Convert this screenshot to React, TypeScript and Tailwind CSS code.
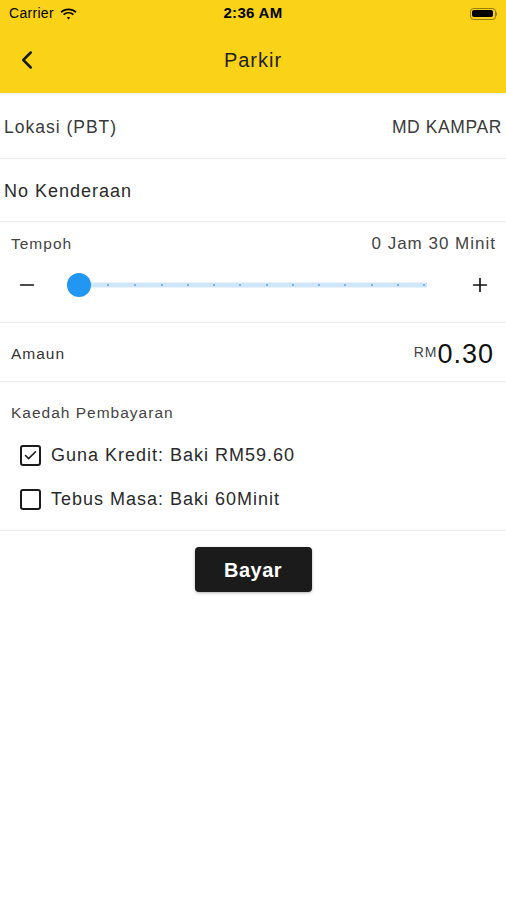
import { ChevronLeft, Minus, Plus, Check } from "lucide-react";

const ticks = [108, 135, 162, 188, 214, 240, 267, 293, 319, 345, 372, 398, 424];

function StatusBar() {
  return (
    <div className="h-[27px] px-[9px] flex items-center justify-between text-[14px] text-black">
      <div className="flex items-center gap-[6px] w-[120px]">
        <span className="tracking-[0.3px]">Carrier</span>
        <svg width="17" height="12" viewBox="0 0 17 12">
          <path d="M8.5 2.2c2.6 0 5 1 6.8 2.7l1.2-1.3C14.4 1.6 11.6.5 8.5.5S2.6 1.6.5 3.6l1.2 1.3C3.5 3.2 5.9 2.2 8.5 2.2z" fill="#000" />
          <path d="M8.5 5.6c1.6 0 3.1.6 4.3 1.7l1.2-1.3C12.5 4.6 10.6 3.9 8.5 3.9S4.5 4.6 3 6l1.2 1.3C5.4 6.2 6.9 5.6 8.5 5.6z" fill="#000" />
          <path d="M8.5 8.9c.7 0 1.3.3 1.8.7L8.5 11.5 6.7 9.6c.5-.4 1.1-.7 1.8-.7z" fill="#000" />
        </svg>
      </div>
      <span className="font-bold text-[15px] tracking-[0.3px]">2:36 AM</span>
      <div className="w-[120px] flex justify-end">
        <div className="flex items-center">
          <div className="w-[26px] h-[12px] rounded-[3.5px] border border-black/40 p-[1.5px]">
            <div className="w-full h-full rounded-[2px] bg-black" />
          </div>
          <div className="w-[1.5px] h-[4px] bg-black/40 rounded-r" />
        </div>
      </div>
    </div>
  );
}

export default function App() {
  return (
    <div
      className="w-[506px] h-[900px] bg-white overflow-hidden"
      style={{ fontFamily: "'Liberation Sans', Arial, sans-serif" }}
    >
      <div className="bg-[#fad318] shadow-[0_1px_2px_rgba(0,0,0,0.08)]">
        <StatusBar />
        <div className="h-[66px] flex items-center relative">
          <ChevronLeft className="w-[30px] h-[30px] ml-[12px] text-[#1a1a1a]" strokeWidth={2} />
          <span className="absolute left-1/2 -translate-x-1/2 text-[20px] tracking-[1px] text-[#1f1f1f]">
            Parkir
          </span>
        </div>
      </div>

      <div className="h-[66px] flex items-center justify-between px-[4px] pt-[3px] border-b border-[#ececec] text-[17.5px] tracking-[1px] text-[#3a3a3a]">
        <span>Lokasi (PBT)</span>
        <span className="tracking-[0.6px]">MD KAMPAR</span>
      </div>
      <div className="h-[63px] flex items-center px-[4px] pt-[3px] border-b border-[#ececec] text-[18px] tracking-[1px] text-[#2a2a2a]">
        <span>No Kenderaan</span>
      </div>

      <div className="h-[101px] border-b border-[#ececec] px-[11px] pt-[9px]">
        <div className="flex justify-between items-baseline text-[#444] tracking-[1px]">
          <span className="text-[15.5px]">Tempoh</span>
          <span className="text-[17px] mr-[-1px]">0 Jam 30 Minit</span>
        </div>
        <div className="flex items-center mt-[13px] h-[30px]">
          <Minus className="w-[22px] h-[22px] ml-[5px] text-[#111]" strokeWidth={1.8} />
          <div className="relative flex-1 h-full ml-[29px] mr-[44px]">
            <div className="absolute left-[12px] right-[-2px] top-1/2 -translate-y-1/2 h-[5px] bg-[#cfe6fb]" />
            {ticks.map((t) => (
              <div
                key={t}
                className="absolute top-1/2 -translate-y-1/2 w-[2px] h-[2px] rounded-full bg-[#5aa6ec]"
                style={{ left: t - 68 }}
              />
            ))}
            <div className="absolute left-0 top-1/2 -translate-y-1/2 w-[24px] h-[24px] rounded-full bg-[#2196f3]" />
          </div>
          <Plus className="w-[22px] h-[22px] mr-[4px] text-[#111]" strokeWidth={1.8} />
        </div>
      </div>

      <div className="h-[59px] flex items-center justify-between px-[11px] pt-[4px] border-b border-[#ececec]">
        <span className="text-[15.5px] tracking-[1px] text-[#333]">Amaun</span>
        <span className="flex items-start text-[#111] mr-[1px] tracking-[1px]">
          <span className="text-[14px] leading-none text-[#444] mt-[4px]">RM</span>
          <span className="text-[27px] leading-none">0.30</span>
        </span>
      </div>

      <div className="h-[149px] border-b border-[#ececec] px-[11px] pt-[19px]">
        <div className="text-[15.5px] tracking-[1px] text-[#444]">Kaedah Pembayaran</div>
        <div className="mt-[18px] flex flex-col gap-[17px] pl-[9px]">
          <label className="flex items-center gap-[10px] text-[18px] tracking-[1px] text-[#2a2a2a]">
            <span className="w-[21px] h-[21px] rounded-[3px] border-2 border-[#1a1a1a] flex items-center justify-center">
              <Check className="w-[15px] h-[15px] text-[#1a1a1a]" strokeWidth={2.5} />
            </span>
            Guna Kredit: Baki RM59.60
          </label>
          <label className="flex items-center gap-[10px] text-[18px] tracking-[1px] text-[#2a2a2a]">
            <span className="w-[21px] h-[21px] rounded-[3px] border-2 border-[#1a1a1a]" />
            Tebus Masa: Baki 60Minit
          </label>
        </div>
      </div>

      <div className="flex justify-center pt-[16px]">
        <button className="w-[117px] h-[45px] rounded-[4px] bg-[#1b1b1b] text-white text-[20px] tracking-[0.5px] font-bold shadow-[0_1px_3px_rgba(0,0,0,0.3)]">
          Bayar
        </button>
      </div>
    </div>
  );
}
